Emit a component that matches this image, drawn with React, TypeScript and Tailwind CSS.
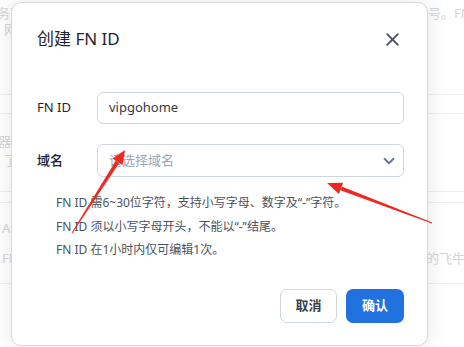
import { ChevronDown } from 'lucide-react'

const font = { fontFamily: '"Noto Sans", "Noto Sans CJK SC", sans-serif' }

// 背景页面（被遮罩的淡色内容）
function BackgroundPage() {
  return (
    <div className="h-[347px] w-[464px] overflow-hidden bg-white text-[13px] leading-[14px] text-[#d3d6db]">
      <div className="flex h-[20px] items-end">
        <div className="w-[428px] shrink-0">
          <span className="-ml-[16px] inline-block whitespace-nowrap">服务可用</span>
        </div>
        <div className="whitespace-nowrap">号。FN ID</div>
      </div>
      <div className="flex h-[16px] items-end pl-[4px]">网</div>
      <div className="h-[59px] border-b border-[#eeeff1]" />
      <div className="h-[19px] border-b border-[#eeeff1]" />
      <div className="flex h-[34px] items-end">
        <span className="-ml-[28px] inline-block whitespace-nowrap">服务器</span>
      </div>
      <div className="flex h-[19px] items-end pl-[4px]">了</div>
      <div className="h-[25px] border-b border-[#eeeff1]" />
      <div className="h-[11px] border-b border-[#eeeff1]" />
      <div className="flex h-[32px] items-end pl-[2px]">Ap</div>
      <div className="flex h-[30px] items-end">
        <div className="w-[428px] shrink-0 pl-[2px]">FN</div>
        <div className="-ml-[2px] whitespace-nowrap">的飞牛</div>
      </div>
      <div className="h-[19px] border-b border-[#eeeff1]" />
    </div>
  )
}

// 标注箭头
function Arrows() {
  return (
    <svg className="pointer-events-none absolute inset-0" width="464" height="347" viewBox="0 0 464 347">
      <g fill="#ec2a22">
        <polygon points="72.4,233.3 71.6,232.7 115.8,160.7 119.2,162.9" />
        <polygon points="125,150 122.6,165 112.4,158.6" />
        <polygon points="432.2,222.5 431.8,223.5 340.3,190.2 341.7,186.4" />
        <polygon points="327,183 343.1,182.7 338.9,193.9" />
      </g>
    </svg>
  )
}

export default function App() {
  return (
    <div className="relative h-[347px] w-[464px] overflow-hidden" style={font}>
      <BackgroundPage />

      {/* 弹窗 */}
      <div className="absolute left-[11px] top-[2px] flex h-[344px] w-[417px] flex-col rounded-[10px] border border-[#d6d8dc] bg-white pl-[25px] pr-[23px] shadow-[0_0_22px_rgba(0,0,0,0.1)]">
        <div className="mt-[24px] flex h-[24px] items-center justify-between">
          <h2 className="text-[17px] font-normal text-[#1f2328]">创建 FN ID</h2>
          <svg className="mr-[5px]" width="13" height="13" viewBox="0 0 13 13">
            <path d="M1.2 1.2 11.8 11.8M11.8 1.2 1.2 11.8" stroke="#4a5261" strokeWidth="1.9" strokeLinecap="round" />
          </svg>
        </div>

        <div className="mt-[41px] flex items-center">
          <label className="w-[60px] text-[13px] font-normal text-[#1f2328]">FN ID</label>
          <div className="flex h-[32px] flex-1 items-center rounded-[6px] border border-[#cdd5e0] px-[11px] text-[13px] text-[#333a44]">
            vipgohome
          </div>
        </div>

        <div className="mt-[20px] flex items-center">
          <label className="w-[60px] text-[13px] font-medium text-[#1f2328]">域名</label>
          <div className="flex h-[33px] flex-1 items-center justify-between rounded-[6px] border border-[#cdd5e0] pl-[11px] pr-[5px] text-[13px] text-[#9aa5b5]">
            <span>请选择域名</span>
            <ChevronDown size={18} strokeWidth={2.4} color="#66758a" />
          </div>
        </div>

        <div className="mt-[14px] pl-[19px] text-[12px] leading-[24px] text-[#4b525c]">
          <p>FN ID 需6~30位字符，支持小写字母、数字及“-”字符。</p>
          <p>FN ID 须以小写字母开头，不能以“-”结尾。</p>
          <p className="-mt-[1px]">FN ID 在1小时内仅可编辑1次。</p>
        </div>

        <div className="mt-auto mb-[22px] flex justify-end gap-[9px]">
          <button className="h-[34px] w-[57px] rounded-[7px] border border-[#cdd5e0] bg-white text-[13px] font-bold text-[#3a414b]">
            取消
          </button>
          <button className="h-[34px] w-[58px] rounded-[7px] bg-[#2171de] text-[13px] font-bold text-white">
            确认
          </button>
        </div>
      </div>

      <Arrows />
    </div>
  )
}
